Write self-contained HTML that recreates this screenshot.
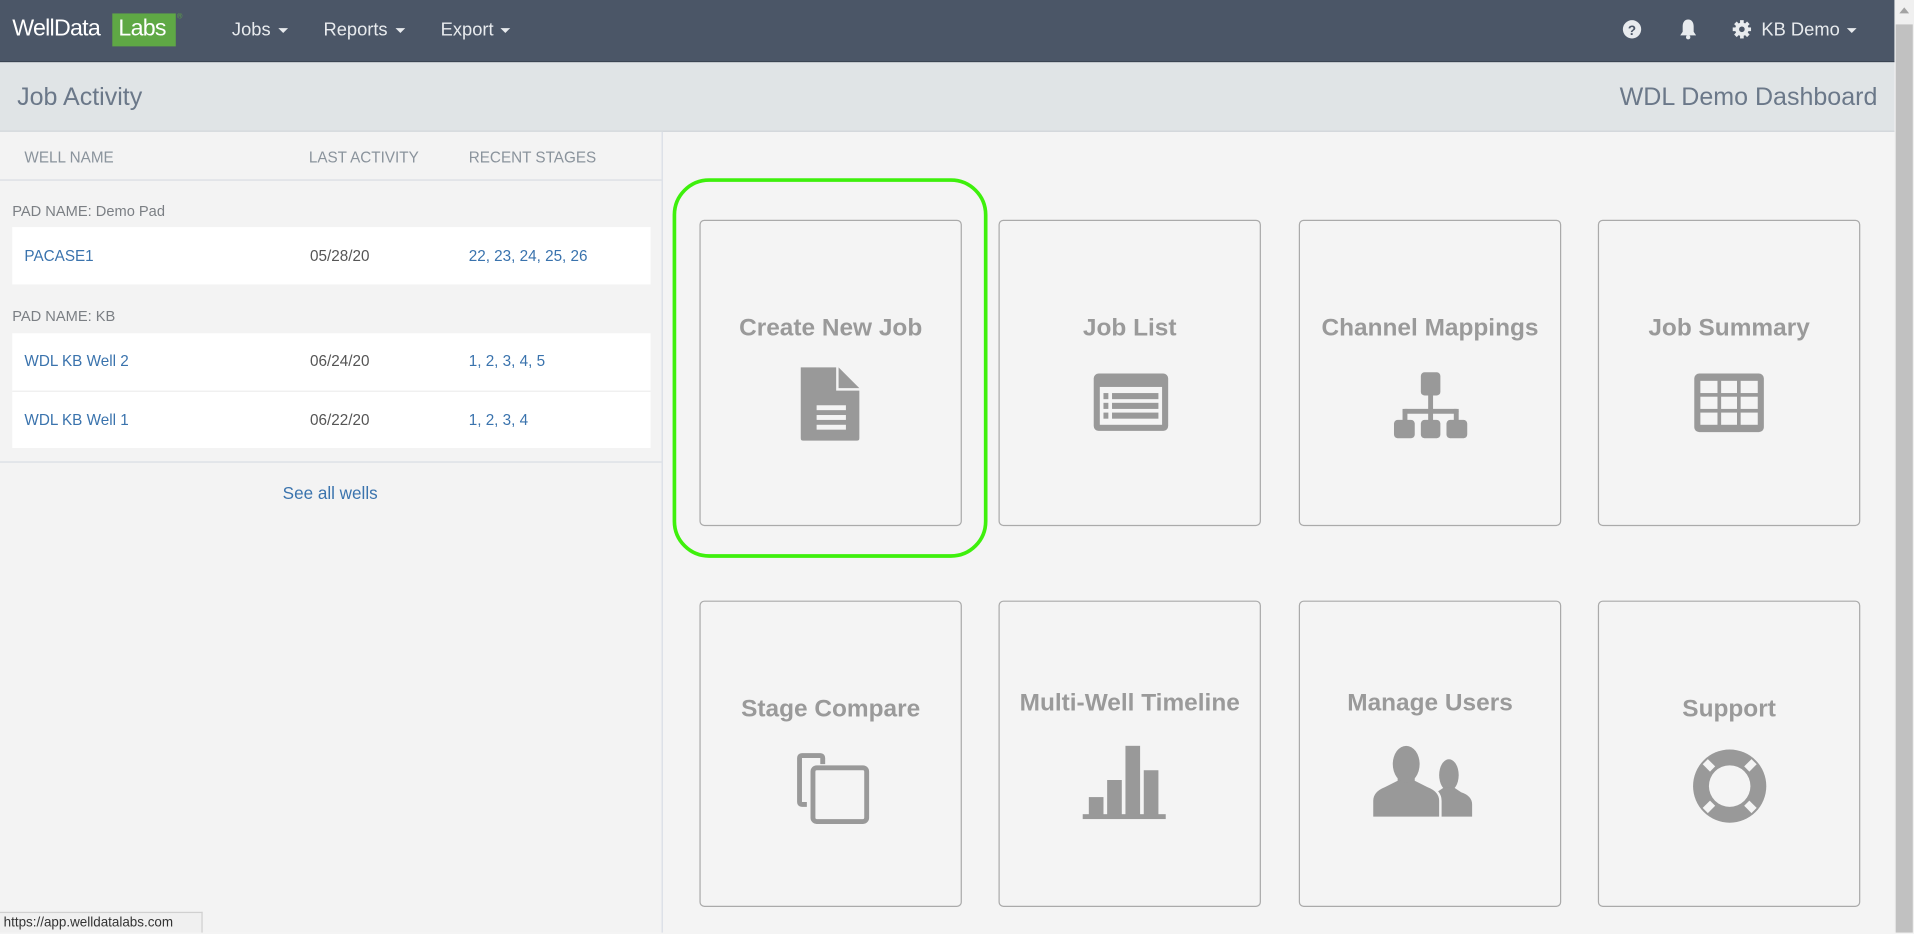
<!DOCTYPE html>
<html><head><meta charset="utf-8"><style>
html,body{margin:0;padding:0;width:1914px;height:932px;overflow:hidden;background:#f4f4f4;font-family:"Liberation Sans",Arial,sans-serif}
#w{position:absolute;left:0;top:0;width:1568px;height:764px;transform:scale(1.22066);transform-origin:0 0;background:#f4f4f4}
.a{position:absolute}
.nav{left:0;top:0;width:1552px;height:50px;background:#4b5667;border-bottom:1px solid #3a4452}
.nt{color:#e8ebee;font-size:15px;top:16px}
.car{display:inline-block;width:0;height:0;border-left:4px solid transparent;border-right:4px solid transparent;border-top:4px solid #e8ebee;vertical-align:middle;margin-left:6px}
.sub{left:0;top:51px;width:1552px;height:56px;background:#e0e4e6;border-bottom:1px solid #d0d5d9}
.left{left:0;top:108px;width:542px;height:656px;background:#f3f3f3;border-right:1px solid #d8dde6}
.hd{font-size:12.5px;color:#8a939c;top:122px}
.pad{font-size:12px;color:#7b7f84}
.row{left:10px;width:523px;background:#fff}
.cell{font-size:12.5px}
.blue{color:#3a73ad}
.dk{color:#555}
.tile{width:213px;height:249px;border:1px solid #aaa;border-radius:4px;background:#f4f4f4}
.tt{position:absolute;left:0;width:100%;text-align:center;font-weight:bold;font-size:20px;color:#9a9a9a}
.ic{position:absolute;left:0;top:0}
</style></head><body><div id="w">
<div class="a nav"></div>
<div class="a" style="left:10px;top:13px;color:#fff;font-size:19px;letter-spacing:-0.6px">WellData</div>
<div class="a" style="left:92px;top:11px;width:52px;height:27px;background:#5fa845"></div>
<div class="a" style="left:97px;top:13px;color:#fff;font-size:19px;letter-spacing:-0.6px">Labs</div>
<div class="a" style="left:145px;top:11px;color:#5fa845;font-size:6px">®</div>
<div class="a nt" style="left:190px">Jobs<span class="car"></span></div>
<div class="a nt" style="left:265px">Reports<span class="car"></span></div>
<div class="a nt" style="left:361px">Export<span class="car"></span></div>
<svg class="a" style="left:1329px;top:16px" width="16" height="16" viewBox="0 0 16 16"><circle cx="8" cy="8" r="7.5" fill="#e8ebee"/><text x="8" y="12.5" text-anchor="middle" font-size="11" font-weight="bold" fill="#4b5667" font-family="Liberation Sans">?</text></svg>
<svg class="a" style="left:1375px;top:15px" width="16" height="18" viewBox="0 0 16 18"><path d="M8 1C5 1 3.5 3.5 3.5 6.5V11L1.5 14H14.5L12.5 11V6.5C12.5 3.5 11 1 8 1Z" fill="#e8ebee"/><circle cx="8" cy="15.5" r="1.8" fill="#e8ebee"/></svg>
<svg class="a" style="left:1419px;top:16px" width="16" height="16" viewBox="0 0 16 16"><g fill="#e8ebee"><circle cx="8" cy="8" r="5.5"/><rect x="6.5" y="0.5" width="3" height="15"/><rect x="0.5" y="6.5" width="15" height="3"/><rect x="6.5" y="0.5" width="3" height="15" transform="rotate(45 8 8)"/><rect x="6.5" y="0.5" width="3" height="15" transform="rotate(-45 8 8)"/></g><circle cx="8" cy="8" r="2.3" fill="#4b5667"/></svg>
<div class="a nt" style="left:1443px">KB Demo<span class="car"></span></div>
<div class="a" style="left:1552px;top:0;width:16px;height:764px;background:#f0f0f0"></div>
<div class="a" style="left:1553px;top:20px;width:14px;height:744px;background:#c1c1c1"></div>
<div class="a" style="left:1556px;top:6px;width:0;height:0;border-left:4px solid transparent;border-right:4px solid transparent;border-bottom:5px solid #a3a3a3"></div>
<div class="a sub"></div>
<div class="a" style="left:14px;top:68px;font-size:20.5px;color:#6b7889">Job Activity</div>
<div class="a" style="right:30px;top:68px;font-size:20.5px;color:#6b7889">WDL Demo Dashboard</div>
<div class="a left"></div>
<div class="a hd" style="left:20px">WELL NAME</div>
<div class="a hd" style="left:253px">LAST ACTIVITY</div>
<div class="a hd" style="left:384px">RECENT STAGES</div>
<div class="a" style="left:0;top:147px;width:542px;height:1px;background:#d8dde3"></div>
<div class="a pad" style="left:10px;top:166px">PAD NAME: Demo Pad</div>
<div class="a row" style="top:186px;height:47px"></div>
<div class="a cell blue" style="left:20px;top:203px">PACASE1</div>
<div class="a cell dk" style="left:254px;top:203px">05/28/20</div>
<div class="a cell blue" style="left:384px;top:203px">22, 23, 24, 25, 26</div>
<div class="a pad" style="left:10px;top:252px">PAD NAME: KB</div>
<div class="a row" style="top:273px;height:94px"></div>
<div class="a" style="left:10px;top:320px;width:523px;height:1px;background:#eee"></div>
<div class="a cell blue" style="left:20px;top:289px">WDL KB Well 2</div>
<div class="a cell dk" style="left:254px;top:289px">06/24/20</div>
<div class="a cell blue" style="left:384px;top:289px">1, 2, 3, 4, 5</div>
<div class="a cell blue" style="left:20px;top:337px">WDL KB Well 1</div>
<div class="a cell dk" style="left:254px;top:337px">06/22/20</div>
<div class="a cell blue" style="left:384px;top:337px">1, 2, 3, 4</div>
<div class="a" style="left:0;top:378px;width:542px;height:1px;background:#d8dde3"></div>
<div class="a" style="left:0;width:541px;top:396px;text-align:center;font-size:14px;color:#3a73ad">See all wells</div>

<div class="a" style="left:551px;top:146px;width:252px;height:305px;border:3px solid #3ef00c;border-radius:30px"></div>

<div class="a tile" style="left:573px;top:180px"><div class="tt" style="top:77px">Create New Job</div>
<svg class="ic" width="213" height="249" viewBox="0 0 213 249"><g transform="translate(0,120)"><path d="M82 0H111V19H130V58Q130 60 128 60H84Q82 60 82 58Z" fill="#999"/><path d="M113 0L130 17H113Z" fill="#999"/><g fill="#f4f4f4"><rect x="95" y="31" width="24" height="4"/><rect x="95" y="39" width="24" height="4"/><rect x="95" y="47" width="24" height="4"/></g></g></svg></div>
<div class="a tile" style="left:818px;top:180px"><div class="tt" style="top:77px">Job List</div>
<svg class="ic" width="213" height="249" viewBox="0 0 213 249"><g transform="translate(0,124)"><rect x="77" y="1" width="61" height="47" rx="4" fill="#999"/><rect x="82" y="12" width="51" height="31" fill="#f4f4f4"/><g fill="#999"><rect x="85" y="17" width="4" height="5"/><rect x="92" y="17" width="38" height="5"/><rect x="85" y="25" width="4" height="5"/><rect x="92" y="25" width="38" height="5"/><rect x="85" y="33" width="4" height="5"/><rect x="92" y="33" width="38" height="5"/></g></g></svg></div>
<div class="a tile" style="left:1064px;top:180px"><div class="tt" style="top:77px">Channel Mappings</div>
<svg class="ic" width="213" height="249" viewBox="0 0 213 249"><g transform="translate(0,124)" fill="#999"><rect x="99" y="0" width="16" height="19" rx="3"/><rect x="105" y="18" width="4" height="24"/><rect x="84" y="30" width="46" height="4" rx="2"/><rect x="84" y="30" width="4" height="10"/><rect x="126" y="30" width="4" height="10"/><rect x="77" y="39" width="17" height="15" rx="3"/><rect x="99" y="39" width="16" height="15" rx="3"/><rect x="120" y="39" width="17" height="15" rx="3"/></g></svg></div>
<div class="a tile" style="left:1309px;top:180px"><div class="tt" style="top:77px">Job Summary</div>
<svg class="ic" width="213" height="249" viewBox="0 0 213 249"><g transform="translate(0,124)"><rect x="78" y="1" width="57" height="48" rx="4" fill="#999"/><g fill="#f4f4f4"><rect x="83" y="7" width="14" height="10"/><rect x="100" y="7" width="13" height="10"/><rect x="116" y="7" width="14" height="10"/><rect x="83" y="20" width="14" height="10"/><rect x="100" y="20" width="13" height="10"/><rect x="116" y="20" width="14" height="10"/><rect x="83" y="33" width="14" height="10"/><rect x="100" y="33" width="13" height="10"/><rect x="116" y="33" width="14" height="10"/></g></g></svg></div>

<div class="a tile" style="left:573px;top:492px"><div class="tt" style="top:77px">Stage Compare</div>
<svg class="ic" width="213" height="249" viewBox="0 0 213 249"><path d="M81 164V128Q81 126 83 126H98Q100 126 100 128V133" stroke="#999" stroke-width="4" fill="none"/><path d="M81 164Q81 166 83 166H87" stroke="#999" stroke-width="4" fill="none"/><rect x="92" y="136" width="44" height="44" rx="3" stroke="#999" stroke-width="4" fill="#f4f4f4"/></svg></div>
<div class="a tile" style="left:818px;top:492px"><div class="tt" style="top:72px">Multi-Well Timeline</div>
<svg class="ic" width="213" height="249" viewBox="0 0 213 249"><g transform="translate(0,118)" fill="#999"><rect x="68" y="56" width="68" height="4"/><rect x="73" y="42" width="12" height="15"/><rect x="88" y="28" width="12" height="29"/><rect x="103" y="0" width="12" height="57"/><rect x="118" y="20" width="12" height="37"/></g></svg></div>
<div class="a tile" style="left:1064px;top:492px"><div class="tt" style="top:72px">Manage Users</div>
<svg class="ic" width="213" height="249" viewBox="0 0 213 249"><g fill="#999"><ellipse cx="122" cy="142" rx="8" ry="13"/><path d="M105 176V166Q105 159 112 156L118 152H126L132 156Q141 159 141 166V176Z"/></g><g fill="#999" stroke="#f4f4f4" stroke-width="2"><path d="M59 177V163Q59 155 69 151L79 146V140Q76 134 76 128V131Q76 119 87 119Q98 119 98 131V128Q98 134 95 140V146L105 151Q115 155 115 163V177Z"/></g><ellipse cx="87" cy="133" rx="11" ry="15" fill="#999"/></svg></div>
<div class="a tile" style="left:1309px;top:492px"><div class="tt" style="top:77px">Support</div>
<svg class="ic" width="213" height="249" viewBox="0 0 213 249"><circle cx="107" cy="151" r="30" fill="#999"/><circle cx="107" cy="151" r="17" fill="#f4f4f4"/><g stroke="#f4f4f4" stroke-width="6"><path d="M93 137L87 131"/><path d="M121 137L127 131"/><path d="M93 165L87 171"/><path d="M121 165L127 171"/></g></svg></div>

<div class="a" style="left:0;top:747px;width:166px;height:17px;background:#f0f0f0;border:1px solid #d0d0d0;border-bottom:none;border-left:none;font-size:11px;color:#333;line-height:17px;padding-left:3px;box-sizing:border-box">https://app.welldatalabs.com</div>
</div></body></html>
